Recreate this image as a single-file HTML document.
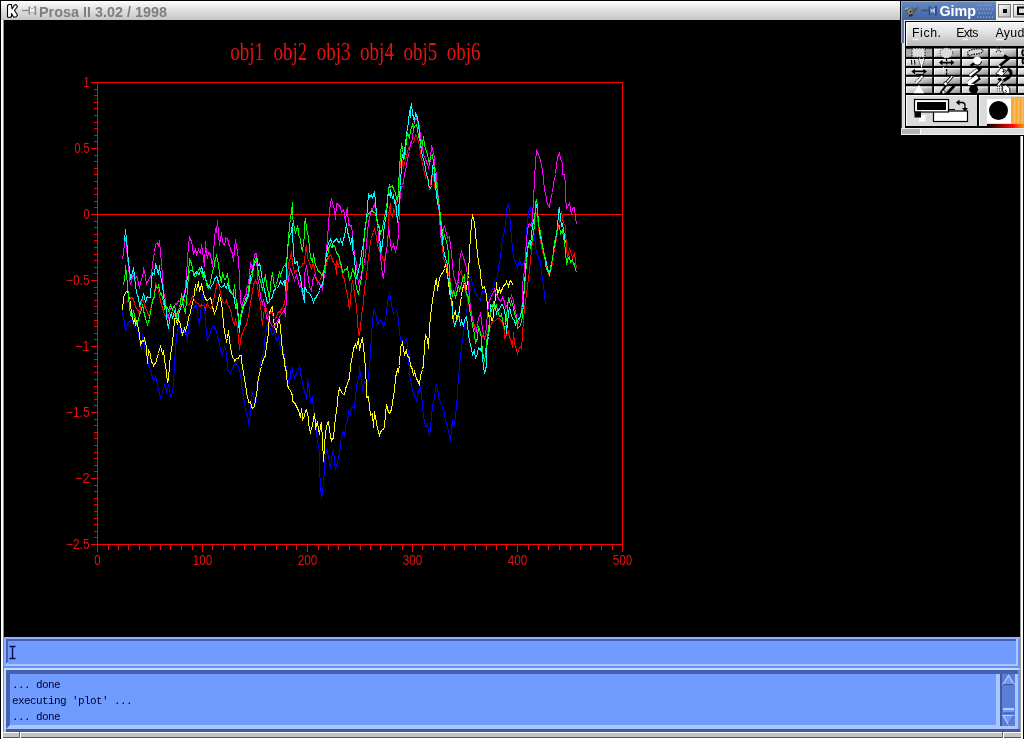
<!DOCTYPE html>
<html><head><meta charset="utf-8"><title>Prosa II 3.02 / 1998</title>
<style>
html,body{margin:0;padding:0;background:#000;}
body{width:1024px;height:739px;position:relative;overflow:hidden;font-family:"Liberation Sans",sans-serif;}
.a{position:absolute;}
.tl{font-family:"Liberation Sans",sans-serif;font-size:14.5px;fill:#e81010;}
.ti{font-family:"Liberation Serif",serif;font-size:25px;fill:#e81010;}
#ttl{left:1px;top:1px;width:899px;height:19px;background:linear-gradient(#fdfdfd,#e4e4e4 40%,#c6c6c6);}
#ttl span{will-change:transform;position:absolute;left:38px;top:3px;font-size:14.4px;font-weight:bold;color:#7e7e7e;letter-spacing:0px;white-space:nowrap;line-height:16px;}
#out{will-change:transform;font-family:"Liberation Mono",monospace;font-size:11px;letter-spacing:-0.6px;color:#00002c;white-space:pre;line-height:16px;left:12px;top:677px;}
.gm{font-size:12px;color:#000;top:25px;line-height:14px;}
</style></head><body>
<!-- main window frame -->
<div class="a" style="left:0;top:0;width:1024px;height:1px;background:#000"></div>
<div class="a" style="left:0;top:0;width:1px;height:739px;background:#000"></div>
<div class="a" style="left:1px;top:1px;width:2px;height:738px;background:#fff"></div>
<div class="a" style="left:3px;top:20px;width:1px;height:712px;background:#8c8c8c"></div>
<div class="a" style="left:1020px;top:136px;width:1px;height:596px;background:#9a9a9a"></div>
<div class="a" style="left:1021px;top:136px;width:2px;height:603px;background:#fff"></div>
<div class="a" style="left:1023px;top:136px;width:1px;height:603px;background:#000"></div>
<div class="a" id="ttl"><span>Prosa II 3.02 / 1998</span></div>
<svg class="a" style="left:0;top:0" width="60" height="20" viewBox="0 0 60 20">
<path d="M7.5 5.5 L9 4.5 L11.5 4.5 L12 9 L14.5 5 L16 4.5 L17.5 6.5 L14.5 10.5 L17.5 15 L16 17 L13.5 17 L11.5 13.5 L11.5 16.5 L10 17.5 L7.500 17 Z" fill="#fff" stroke="#000" stroke-width="1.1" stroke-linejoin="round"/>
<path d="M22 10.5h7" stroke="#8a8a8a" stroke-width="1.4"/>
<path d="M29.500 7L32 9.300L35 6.500V14.500L32 11.700L29.500 14Z" fill="#fafafa" stroke="#8a8a8a" stroke-width="0.8"/>
<path d="M29.200 6.500v8 M35.500 6v9" stroke="#888" stroke-width="1.3"/>
</svg>
<!-- plot -->
<svg class="a" style="left:0;top:20px;will-change:transform" width="1020" height="617" viewBox="0 20 1020 617">
<rect x="97.5" y="82.5" width="525" height="462" fill="none" stroke="#f00" stroke-width="1" shape-rendering="crispEdges"/>
<line x1="97" y1="214.5" x2="622" y2="214.5" stroke="#f00" shape-rendering="crispEdges"/>
<path d="M97.5 82.5h-7M97.5 89.5h-4M97.5 95.5h-4M97.5 102.5h-4M97.5 108.5h-4M97.5 115.5h-4M97.5 122.5h-4M97.5 128.5h-4M97.5 135.5h-4M97.5 141.5h-4M97.5 148.5h-7M97.5 155.5h-4M97.5 161.5h-4M97.5 168.5h-4M97.5 174.5h-4M97.5 181.5h-4M97.5 188.5h-4M97.5 194.5h-4M97.5 201.5h-4M97.5 207.5h-4M97.5 214.5h-7M97.5 221.5h-4M97.5 227.5h-4M97.5 234.5h-4M97.5 240.5h-4M97.5 247.5h-4M97.5 254.5h-4M97.5 260.5h-4M97.5 267.5h-4M97.5 273.5h-4M97.5 280.5h-7M97.5 287.5h-4M97.5 293.5h-4M97.5 300.5h-4M97.5 306.5h-4M97.5 313.5h-4M97.5 320.5h-4M97.5 326.5h-4M97.5 333.5h-4M97.5 339.5h-4M97.5 346.5h-7M97.5 353.5h-4M97.5 359.5h-4M97.5 366.5h-4M97.5 372.5h-4M97.5 379.5h-4M97.5 386.5h-4M97.5 392.5h-4M97.5 399.5h-4M97.5 405.5h-4M97.5 412.5h-7M97.5 419.5h-4M97.5 425.5h-4M97.5 432.5h-4M97.5 438.5h-4M97.5 445.5h-4M97.5 452.5h-4M97.5 458.5h-4M97.5 465.5h-4M97.5 471.5h-4M97.5 478.5h-7M97.5 485.5h-4M97.5 491.5h-4M97.5 498.5h-4M97.5 504.5h-4M97.5 511.5h-4M97.5 518.5h-4M97.5 524.5h-4M97.5 531.5h-4M97.5 537.5h-4M97.5 544.5h-7M97.5 544.5v7M108.5 544.5v5M118.5 544.5v5M128.5 544.5v5M139.5 544.5v5M150.5 544.5v5M160.5 544.5v5M170.5 544.5v5M181.5 544.5v5M192.5 544.5v5M202.5 544.5v7M212.5 544.5v5M223.5 544.5v5M234.5 544.5v5M244.5 544.5v5M254.5 544.5v5M265.5 544.5v5M276.5 544.5v5M286.5 544.5v5M296.5 544.5v5M307.5 544.5v7M318.5 544.5v5M328.5 544.5v5M338.5 544.5v5M349.5 544.5v5M360.5 544.5v5M370.5 544.5v5M380.5 544.5v5M391.5 544.5v5M402.5 544.5v5M412.5 544.5v7M422.5 544.5v5M433.5 544.5v5M444.5 544.5v5M454.5 544.5v5M464.5 544.5v5M475.5 544.5v5M486.5 544.5v5M496.5 544.5v5M506.5 544.5v5M517.5 544.5v7M528.5 544.5v5M538.5 544.5v5M548.5 544.5v5M559.5 544.5v5M570.5 544.5v5M580.5 544.5v5M590.5 544.5v5M601.5 544.5v5M612.5 544.5v5M622.5 544.5v7" stroke="#f00" fill="none" shape-rendering="crispEdges"/>
<text x="89.5" y="86.8" text-anchor="end" textLength="6" lengthAdjust="spacingAndGlyphs" class="tl">1</text>
<text x="89.5" y="152.8" text-anchor="end" textLength="15" lengthAdjust="spacingAndGlyphs" class="tl">0.5</text>
<text x="89.5" y="218.8" text-anchor="end" textLength="6" lengthAdjust="spacingAndGlyphs" class="tl">0</text>
<text x="89.5" y="284.8" text-anchor="end" textLength="23.5" lengthAdjust="spacingAndGlyphs" class="tl">−0.5</text>
<text x="89.5" y="350.8" text-anchor="end" textLength="14.5" lengthAdjust="spacingAndGlyphs" class="tl">−1</text>
<text x="89.5" y="416.8" text-anchor="end" textLength="23.5" lengthAdjust="spacingAndGlyphs" class="tl">−1.5</text>
<text x="89.5" y="482.8" text-anchor="end" textLength="14.5" lengthAdjust="spacingAndGlyphs" class="tl">−2</text>
<text x="89.5" y="548.8" text-anchor="end" textLength="23.5" lengthAdjust="spacingAndGlyphs" class="tl">−2.5</text>
<text x="97.5" y="564.6" text-anchor="middle" textLength="6.5" lengthAdjust="spacingAndGlyphs" class="tl">0</text>
<text x="202.5" y="564.6" text-anchor="middle" textLength="19.5" lengthAdjust="spacingAndGlyphs" class="tl">100</text>
<text x="307.5" y="564.6" text-anchor="middle" textLength="19.5" lengthAdjust="spacingAndGlyphs" class="tl">200</text>
<text x="412.5" y="564.6" text-anchor="middle" textLength="19.5" lengthAdjust="spacingAndGlyphs" class="tl">300</text>
<text x="517.5" y="564.6" text-anchor="middle" textLength="19.5" lengthAdjust="spacingAndGlyphs" class="tl">400</text>
<text x="622.5" y="564.6" text-anchor="middle" textLength="19.5" lengthAdjust="spacingAndGlyphs" class="tl">500</text>
<text x="230.2" y="59.5" textLength="33.8" lengthAdjust="spacingAndGlyphs" class="ti">obj1</text>
<text x="273.5" y="59.5" textLength="33.8" lengthAdjust="spacingAndGlyphs" class="ti">obj2</text>
<text x="316.8" y="59.5" textLength="33.8" lengthAdjust="spacingAndGlyphs" class="ti">obj3</text>
<text x="360.1" y="59.5" textLength="33.8" lengthAdjust="spacingAndGlyphs" class="ti">obj4</text>
<text x="403.4" y="59.5" textLength="33.8" lengthAdjust="spacingAndGlyphs" class="ti">obj5</text>
<text x="446.7" y="59.5" textLength="33.8" lengthAdjust="spacingAndGlyphs" class="ti">obj6</text>
<polyline points="122.5,312.5 124.5,322.5 125.5,330.5 126.5,328.5 126.5,326.5 127.5,324.5 128.5,321.5 129.5,321.5 130.5,320.5 132.5,320.5 133.5,323.5 133.5,324.5 134.5,326.5 136.5,328.5 137.5,329.5 138.5,332.5 139.5,340.5 141.5,349.5 142.5,338.5 142.5,334.5 144.5,342.5 144.5,346.5 145.5,353.5 147.5,359.5 148.5,364.5 149.5,368.5 150.5,369.5 151.5,374.5 152.5,376.5 153.5,381.5 155.5,376.5 156.5,380.5 157.5,385.5 158.5,389.5 159.5,392.5 160.5,398.5 162.5,392.5 164.5,385.5 165.5,387.5 166.5,391.5 167.5,389.5 168.5,384.5 169.5,389.5 170.5,396.5 171.5,396.5 172.5,392.5 173.5,384.5 174.5,363.5 175.5,349.5 176.5,337.5 177.5,330.5 178.5,327.5 179.5,325.5 180.5,330.5 181.5,334.5 182.5,331.5 183.5,327.5 184.5,330.5 185.5,334.5 186.5,332.5 187.5,341.5 188.5,327.5 189.5,321.5 191.5,315.5 192.5,312.5 193.5,308.5 194.5,306.5 195.5,306.5 196.5,304.5 196.5,303.5 197.5,315.5 199.5,325.5 200.5,313.5 202.5,294.5 203.5,300.5 204.5,305.5 205.5,322.5 207.5,341.5 208.5,338.5 209.5,334.5 210.5,332.5 211.5,327.5 212.5,326.5 213.5,325.5 214.5,327.5 216.5,331.5 217.5,336.5 218.5,340.5 219.5,343.5 220.5,349.5 221.5,351.5 222.5,354.5 223.5,349.5 224.5,346.5 226.5,352.5 227.5,369.5 228.5,371.5 229.5,372.5 230.5,373.5 231.5,369.5 232.5,368.5 233.5,366.5 234.5,363.5 235.5,364.5 235.5,362.5 236.5,364.5 237.5,365.5 238.5,366.5 239.5,371.5 240.5,374.5 241.5,380.5 241.5,385.5 242.5,391.5 243.5,396.5 244.5,403.5 245.5,408.5 246.5,413.5 247.5,415.5 248.5,420.5 248.5,424.5 250.5,413.5 251.5,390.5 252.5,394.5 253.5,397.5 254.5,400.5 255.5,404.5 256.5,398.5 256.5,394.5 258.5,380.5 259.5,369.5 260.5,363.5 261.5,358.5 262.5,356.5 263.5,355.5 264.5,344.5 265.5,332.5 267.5,324.5 268.5,325.5 269.5,327.5 270.5,329.5 271.5,332.5 272.5,334.5 273.5,333.5 274.5,330.5 275.5,336.5 276.5,340.5 277.5,340.5 278.5,337.5 279.5,342.5 280.5,348.5 281.5,347.5 282.5,346.5 283.5,353.5 284.5,355.5 285.5,360.5 285.5,362.5 286.5,369.5 287.5,373.5 288.5,382.5 289.5,385.5 290.5,374.5 291.5,366.5 292.5,370.5 292.5,373.5 294.5,376.5 294.5,378.5 295.5,375.5 296.5,373.5 297.5,370.5 298.5,369.5 299.5,366.5 300.5,369.5 300.5,373.5 301.5,377.5 302.5,381.5 303.5,388.5 304.5,390.5 305.5,394.5 306.5,399.5 307.5,386.5 307.5,378.5 309.5,390.5 310.5,402.5 311.5,399.5 312.5,396.5 313.5,408.5 314.5,418.5 316.5,426.5 316.5,432.5 317.5,441.5 319.5,452.5 319.5,469.5 320.5,486.5 321.5,498.5 323.5,483.5 324.5,466.5 325.5,454.5 326.5,451.5 326.5,448.5 328.5,456.5 329.5,463.5 330.5,468.5 331.5,460.5 332.5,452.5 333.5,449.5 334.5,460.5 335.5,470.5 336.5,464.5 337.5,463.5 338.5,456.5 339.5,454.5 340.5,444.5 341.5,437.5 342.5,432.5 343.5,431.5 344.5,436.5 345.5,425.5 347.5,420.5 348.5,413.5 348.5,410.5 349.5,411.5 350.5,413.5 351.5,408.5 352.5,406.5 353.5,407.5 354.5,408.5 355.5,396.5 356.5,385.5 358.5,378.5 359.5,371.5 359.5,366.5 360.5,374.5 361.5,378.5 362.5,390.5 364.5,381.5 365.5,382.5 366.5,385.5 366.5,387.5 367.5,382.5 368.5,378.5 369.5,362.5 370.5,355.5 371.5,332.5 372.5,321.5 373.5,312.5 374.5,310.5 376.5,316.5 377.5,324.5 378.5,322.5 379.5,321.5 380.5,319.5 382.5,322.5 383.5,326.5 384.5,323.5 386.5,313.5 387.5,300.5 389.5,294.5 390.5,298.5 392.5,309.5 393.5,314.5 395.5,312.5 396.5,311.5 396.5,309.5 398.5,319.5 399.5,331.5 400.5,339.5 401.5,341.5 403.5,339.5 404.5,342.5 405.5,339.5 406.5,338.5 407.5,345.5 408.5,354.5 409.5,374.5 411.5,384.5 412.5,391.5 413.5,392.5 414.5,396.5 415.5,397.5 416.5,400.5 417.5,395.5 418.5,391.5 420.5,387.5 421.5,393.5 422.5,406.5 424.5,422.5 425.5,424.5 425.5,426.5 426.5,426.5 427.5,424.5 429.5,435.5 430.5,428.5 431.5,416.5 432.5,406.5 434.5,397.5 435.5,388.5 436.5,384.5 438.5,394.5 439.5,400.5 441.5,403.5 442.5,408.5 444.5,413.5 445.5,421.5 447.5,425.5 448.5,431.5 450.5,441.5 451.5,429.5 452.5,419.5 452.5,426.5 454.5,424.5 455.5,416.5 456.5,406.5 457.5,391.5 458.5,377.5 459.5,365.5 460.5,357.5 461.5,345.5 463.5,334.5 464.5,323.5 466.5,314.5 467.5,304.5 468.5,290.5 469.5,279.5 470.5,275.5 472.5,284.5 473.5,285.5 474.5,290.5 475.5,292.5 476.5,294.5 477.5,296.5 478.5,297.5 479.5,298.5 480.5,300.5 481.5,294.5 482.5,290.5 484.5,290.5 485.5,294.5 486.5,295.5 487.5,298.5 488.5,296.5 489.5,296.5 490.5,295.5 491.5,291.5 492.5,288.5 493.5,287.5 494.5,282.5 495.5,280.5 497.5,275.5 498.5,266.5 500.5,257.5 501.5,246.5 502.5,238.5 504.5,231.5 505.5,225.5 506.5,211.5 507.5,205.5 508.5,204.5 509.5,211.5 510.5,225.5 511.5,237.5 512.5,247.5 513.5,257.5 515.5,262.5 516.5,265.5 517.5,268.5 518.5,264.5 519.5,260.5 520.5,262.5 521.5,266.5 522.5,264.5 523.5,262.5 524.5,260.5 525.5,258.5 526.5,240.5 526.5,229.5 527.5,223.5 528.5,211.5 530.5,207.5 531.5,214.5 532.5,223.5 533.5,232.5 534.5,234.5 535.5,247.5 537.5,254.5 538.5,257.5 539.5,260.5 540.5,260.5 541.5,273.5 543.5,284.5 544.5,294.5 545.5,304.5" fill="none" stroke="#0000ff" stroke-width="1" stroke-linejoin="miter" shape-rendering="crispEdges"/>
<polyline points="122.5,310.5 123.5,297.5 125.5,292.5 126.5,291.5 127.5,290.5 128.5,294.5 130.5,303.5 131.5,313.5 133.5,322.5 134.5,319.5 135.5,324.5 136.5,321.5 138.5,328.5 139.5,335.5 140.5,344.5 142.5,340.5 143.5,341.5 144.5,338.5 146.5,347.5 147.5,363.5 148.5,349.5 150.5,354.5 151.5,362.5 152.5,362.5 153.5,365.5 154.5,363.5 155.5,363.5 157.5,356.5 158.5,353.5 159.5,349.5 160.5,346.5 162.5,353.5 163.5,350.5 164.5,359.5 166.5,372.5 167.5,382.5 168.5,378.5 169.5,366.5 170.5,354.5 172.5,343.5 173.5,331.5 174.5,320.5 175.5,316.5 177.5,324.5 178.5,319.5 180.5,324.5 181.5,330.5 182.5,334.5 184.5,328.5 185.5,330.5 187.5,324.5 188.5,317.5 190.5,312.5 191.5,306.5 193.5,299.5 194.5,292.5 195.5,284.5 196.5,290.5 198.5,281.5 199.5,291.5 201.5,284.5 202.5,288.5 203.5,293.5 204.5,296.5 205.5,298.5 206.5,300.5 207.5,300.5 208.5,299.5 210.5,297.5 211.5,301.5 212.5,306.5 213.5,310.5 214.5,313.5 216.5,308.5 217.5,304.5 218.5,299.5 219.5,294.5 221.5,302.5 222.5,310.5 223.5,324.5 224.5,331.5 226.5,341.5 227.5,338.5 228.5,330.5 229.5,340.5 231.5,352.5 232.5,357.5 233.5,358.5 234.5,359.5 234.5,361.5 235.5,359.5 236.5,358.5 237.5,358.5 238.5,358.5 239.5,355.5 241.5,355.5 241.5,360.5 242.5,367.5 243.5,371.5 244.5,380.5 245.5,383.5 246.5,392.5 247.5,397.5 248.5,400.5 248.5,402.5 250.5,402.5 250.5,401.5 251.5,406.5 252.5,408.5 253.5,407.5 254.5,406.5 255.5,399.5 256.5,394.5 257.5,388.5 257.5,385.5 258.5,377.5 259.5,374.5 260.5,369.5 261.5,366.5 262.5,362.5 263.5,358.5 264.5,357.5 264.5,357.5 265.5,355.5 266.5,344.5 267.5,340.5 268.5,331.5 269.5,313.5 270.5,309.5 272.5,306.5 273.5,318.5 274.5,326.5 276.5,331.5 277.5,324.5 279.5,319.5 280.5,328.5 281.5,338.5 282.5,352.5 284.5,360.5 284.5,364.5 286.5,372.5 286.5,374.5 287.5,384.5 288.5,388.5 289.5,389.5 291.5,392.5 292.5,396.5 292.5,401.5 294.5,402.5 295.5,404.5 295.5,404.5 296.5,406.5 298.5,410.5 299.5,413.5 300.5,417.5 301.5,408.5 302.5,417.5 302.5,420.5 304.5,415.5 305.5,411.5 306.5,409.5 306.5,410.5 308.5,417.5 308.5,422.5 309.5,429.5 310.5,432.5 311.5,428.5 312.5,425.5 313.5,418.5 314.5,413.5 315.5,424.5 315.5,429.5 316.5,424.5 317.5,422.5 318.5,428.5 319.5,434.5 320.5,426.5 321.5,422.5 322.5,440.5 323.5,461.5 324.5,446.5 325.5,432.5 327.5,422.5 328.5,421.5 329.5,429.5 330.5,436.5 331.5,440.5 332.5,438.5 333.5,438.5 334.5,425.5 336.5,410.5 337.5,403.5 337.5,399.5 338.5,392.5 339.5,388.5 340.5,390.5 342.5,393.5 343.5,394.5 344.5,394.5 345.5,390.5 345.5,388.5 346.5,386.5 347.5,383.5 348.5,380.5 349.5,378.5 350.5,366.5 351.5,360.5 352.5,355.5 353.5,348.5 355.5,344.5 356.5,347.5 358.5,338.5 359.5,350.5 361.5,340.5 362.5,338.5 363.5,347.5 364.5,355.5 365.5,369.5 366.5,387.5 366.5,397.5 368.5,396.5 369.5,406.5 370.5,415.5 372.5,413.5 373.5,427.5 374.5,411.5 375.5,417.5 376.5,422.5 377.5,428.5 378.5,431.5 379.5,435.5 380.5,432.5 381.5,430.5 382.5,429.5 383.5,429.5 384.5,426.5 385.5,413.5 386.5,404.5 387.5,408.5 388.5,412.5 389.5,413.5 390.5,411.5 391.5,409.5 392.5,402.5 394.5,390.5 395.5,377.5 397.5,369.5 398.5,371.5 399.5,365.5 400.5,347.5 402.5,342.5 403.5,348.5 404.5,354.5 406.5,350.5 407.5,356.5 409.5,357.5 410.5,365.5 412.5,369.5 413.5,375.5 414.5,371.5 416.5,378.5 417.5,380.5 419.5,384.5 420.5,375.5 422.5,369.5 423.5,365.5 424.5,345.5 425.5,334.5 427.5,339.5 428.5,348.5 429.5,328.5 430.5,316.5 431.5,307.5 432.5,300.5 434.5,288.5 435.5,281.5 436.5,279.5 437.5,290.5 439.5,278.5 440.5,275.5 441.5,274.5 442.5,272.5 443.5,271.5 444.5,268.5 445.5,264.5 447.5,275.5 448.5,282.5 449.5,291.5 450.5,298.5 452.5,301.5 452.5,318.5 454.5,313.5 455.5,310.5 456.5,319.5 458.5,316.5 459.5,309.5 460.5,302.5 461.5,296.5 462.5,288.5 463.5,286.5 464.5,284.5 466.5,288.5 467.5,281.5 468.5,275.5 469.5,251.5 470.5,236.5 471.5,224.5 472.5,214.5 474.5,222.5 475.5,233.5 476.5,244.5 477.5,252.5 478.5,263.5 480.5,270.5 480.5,275.5 481.5,282.5 482.5,288.5 484.5,286.5 484.5,287.5 486.5,294.5 487.5,306.5 488.5,316.5 489.5,316.5 490.5,314.5 491.5,319.5 492.5,322.5 493.5,313.5 494.5,304.5 495.5,297.5 496.5,282.5 497.5,294.5 499.5,288.5 500.5,292.5 502.5,288.5 503.5,285.5 505.5,284.5 506.5,281.5 508.5,286.5 509.5,282.5 510.5,280.5 512.5,283.5 512.5,284.5" fill="none" stroke="#ffff00" stroke-width="1" stroke-linejoin="miter" shape-rendering="crispEdges"/>
<polyline points="125.5,303.5 126.5,302.5 127.5,301.5 128.5,299.5 129.5,300.5 130.5,297.5 131.5,297.5 132.5,297.5 133.5,299.5 134.5,303.5 135.5,306.5 136.5,308.5 137.5,309.5 139.5,313.5 140.5,306.5 141.5,301.5 142.5,299.5 143.5,300.5 144.5,305.5 145.5,307.5 147.5,312.5 148.5,314.5 148.5,315.5 149.5,313.5 150.5,309.5 151.5,304.5 152.5,300.5 154.5,296.5 155.5,282.5 156.5,286.5 158.5,289.5 158.5,290.5 159.5,295.5 160.5,300.5 161.5,305.5 162.5,307.5 163.5,311.5 164.5,314.5 165.5,316.5 166.5,317.5 167.5,316.5 168.5,318.5 169.5,318.5 170.5,315.5 171.5,312.5 172.5,312.5 173.5,313.5 174.5,314.5 175.5,316.5 176.5,318.5 177.5,314.5 178.5,311.5 179.5,311.5 180.5,308.5 181.5,304.5 182.5,303.5 183.5,303.5 184.5,300.5 185.5,302.5 186.5,302.5 187.5,302.5 188.5,305.5 189.5,304.5 190.5,301.5 191.5,298.5 192.5,296.5 193.5,298.5 194.5,299.5 195.5,302.5 196.5,302.5 197.5,303.5 198.5,303.5 199.5,306.5 200.5,306.5 201.5,304.5 202.5,305.5 203.5,305.5 204.5,306.5 205.5,309.5 206.5,305.5 207.5,303.5 208.5,306.5 210.5,308.5 211.5,307.5 212.5,304.5 212.5,303.5 214.5,296.5 215.5,290.5 216.5,286.5 217.5,279.5 218.5,282.5 219.5,287.5 220.5,291.5 221.5,297.5 222.5,301.5 224.5,303.5 225.5,302.5 226.5,300.5 227.5,304.5 228.5,305.5 229.5,307.5 230.5,310.5 231.5,313.5 232.5,319.5 234.5,325.5 235.5,318.5 237.5,327.5 238.5,338.5 239.5,349.5 240.5,340.5 242.5,332.5 243.5,331.5 244.5,327.5 245.5,326.5 246.5,324.5 247.5,319.5 248.5,316.5 249.5,309.5 250.5,303.5 252.5,291.5 253.5,284.5 254.5,282.5 255.5,280.5 257.5,284.5 258.5,294.5 260.5,303.5 261.5,316.5 262.5,325.5 263.5,313.5 265.5,306.5 266.5,310.5 267.5,313.5 268.5,316.5 268.5,317.5 269.5,314.5 270.5,313.5 271.5,311.5 272.5,312.5 273.5,318.5 274.5,319.5 275.5,318.5 276.5,316.5 277.5,313.5 278.5,311.5 280.5,312.5 280.5,309.5 282.5,308.5 283.5,305.5 284.5,303.5 285.5,297.5 286.5,285.5 287.5,274.5 288.5,263.5 290.5,257.5 291.5,251.5 292.5,263.5 294.5,272.5 295.5,270.5 296.5,271.5 297.5,269.5 298.5,268.5 299.5,266.5 300.5,267.5 301.5,266.5 302.5,263.5 304.5,263.5 305.5,248.5 306.5,245.5 307.5,257.5 309.5,263.5 310.5,265.5 311.5,269.5 312.5,264.5 313.5,263.5 314.5,268.5 315.5,275.5 316.5,278.5 317.5,283.5 318.5,281.5 320.5,279.5 321.5,276.5 322.5,273.5 323.5,271.5 324.5,269.5 325.5,268.5 326.5,263.5 327.5,259.5 328.5,257.5 329.5,255.5 330.5,254.5 331.5,256.5 332.5,260.5 333.5,262.5 334.5,263.5 335.5,265.5 336.5,274.5 336.5,260.5 338.5,266.5 339.5,261.5 341.5,269.5 342.5,274.5 343.5,278.5 344.5,278.5 345.5,286.5 347.5,294.5 348.5,303.5 349.5,309.5 350.5,300.5 351.5,286.5 352.5,280.5 354.5,293.5 356.5,306.5 357.5,321.5 358.5,334.5 359.5,335.5 360.5,326.5 361.5,315.5 363.5,302.5 364.5,288.5 366.5,277.5 367.5,265.5 369.5,248.5 370.5,241.5 371.5,238.5 372.5,234.5 373.5,232.5 374.5,228.5 376.5,236.5 377.5,245.5 378.5,248.5 379.5,247.5 380.5,247.5 381.5,252.5 382.5,258.5 384.5,261.5 385.5,254.5 387.5,244.5 388.5,229.5 388.5,214.5 390.5,203.5 390.5,211.5 392.5,217.5 393.5,208.5 394.5,211.5 396.5,204.5 397.5,200.5 398.5,189.5 399.5,185.5 400.5,151.5 402.5,162.5 403.5,168.5 404.5,162.5 406.5,156.5 407.5,151.5 408.5,148.5 409.5,146.5 410.5,145.5 411.5,142.5 412.5,143.5 413.5,142.5 414.5,139.5 415.5,134.5 416.5,135.5 417.5,138.5 419.5,145.5 420.5,154.5 422.5,162.5 423.5,168.5 425.5,177.5 426.5,174.5 428.5,183.5 429.5,189.5 430.5,182.5 431.5,177.5 433.5,174.5 434.5,186.5 436.5,192.5 437.5,198.5 438.5,206.5 439.5,214.5 440.5,226.5 441.5,235.5 442.5,246.5 443.5,258.5 444.5,261.5 446.5,264.5 447.5,270.5 448.5,274.5 450.5,279.5 450.5,287.5 451.5,289.5 452.5,292.5 453.5,293.5 455.5,290.5 456.5,284.5 457.5,281.5 458.5,278.5 459.5,273.5 461.5,270.5 462.5,279.5 463.5,282.5 464.5,286.5 465.5,291.5 466.5,293.5 467.5,297.5 468.5,304.5 469.5,307.5 470.5,312.5 471.5,313.5 472.5,318.5 473.5,322.5 474.5,326.5 476.5,327.5 477.5,331.5 478.5,331.5 479.5,332.5 480.5,334.5 481.5,334.5 482.5,336.5 484.5,336.5 485.5,335.5 486.5,334.5 487.5,331.5 488.5,328.5 489.5,326.5 490.5,327.5 491.5,323.5 492.5,321.5 493.5,320.5 494.5,321.5 496.5,319.5 497.5,318.5 498.5,318.5 499.5,318.5 500.5,319.5 502.5,323.5 503.5,326.5 504.5,331.5 504.5,338.5 506.5,334.5 507.5,333.5 508.5,331.5 509.5,337.5 511.5,341.5 512.5,347.5 513.5,332.5 514.5,343.5 516.5,349.5 517.5,354.5 518.5,349.5 520.5,346.5 521.5,349.5 522.5,334.5 523.5,319.5 524.5,308.5 526.5,294.5 527.5,286.5 528.5,278.5 529.5,269.5 530.5,260.5 531.5,249.5 532.5,240.5 533.5,232.5 534.5,224.5 535.5,211.5 537.5,217.5 538.5,225.5 539.5,236.5 540.5,240.5 541.5,246.5 542.5,250.5 543.5,254.5 544.5,257.5 545.5,262.5 546.5,267.5 547.5,270.5 548.5,272.5 549.5,276.5 550.5,270.5 551.5,268.5 552.5,262.5 553.5,256.5 554.5,248.5 555.5,244.5 556.5,238.5 557.5,232.5 558.5,225.5 559.5,220.5 560.5,217.5 561.5,211.5 562.5,218.5 563.5,223.5 565.5,225.5 565.5,231.5 567.5,259.5 568.5,253.5 569.5,248.5 571.5,254.5 572.5,257.5 574.5,253.5 575.5,260.5 576.5,268.5" fill="none" stroke="#ff0000" stroke-width="1" stroke-linejoin="miter" shape-rendering="crispEdges"/>
<polyline points="122.5,259.5 124.5,244.5 125.5,237.5 126.5,246.5 127.5,259.5 128.5,263.5 129.5,279.5 130.5,284.5 132.5,276.5 133.5,273.5 134.5,279.5 136.5,276.5 137.5,278.5 139.5,288.5 140.5,282.5 142.5,276.5 143.5,271.5 143.5,267.5 145.5,276.5 146.5,284.5 148.5,279.5 149.5,278.5 151.5,274.5 152.5,263.5 154.5,252.5 155.5,244.5 157.5,242.5 158.5,246.5 159.5,240.5 160.5,252.5 161.5,263.5 162.5,276.5 163.5,290.5 164.5,296.5 165.5,299.5 166.5,312.5 168.5,318.5 169.5,310.5 170.5,308.5 171.5,308.5 172.5,308.5 174.5,307.5 175.5,303.5 176.5,304.5 177.5,302.5 178.5,300.5 179.5,301.5 180.5,300.5 181.5,298.5 182.5,297.5 183.5,295.5 184.5,294.5 185.5,285.5 186.5,274.5 187.5,259.5 188.5,244.5 189.5,237.5 191.5,241.5 192.5,246.5 193.5,254.5 195.5,248.5 196.5,254.5 196.5,255.5 198.5,249.5 199.5,252.5 200.5,253.5 201.5,244.5 203.5,258.5 204.5,266.5 205.5,241.5 206.5,253.5 207.5,258.5 208.5,252.5 209.5,252.5 210.5,254.5 212.5,266.5 213.5,253.5 214.5,237.5 215.5,229.5 216.5,231.5 217.5,220.5 218.5,233.5 219.5,245.5 221.5,232.5 222.5,242.5 224.5,245.5 225.5,241.5 225.5,237.5 226.5,238.5 227.5,238.5 229.5,246.5 230.5,247.5 230.5,249.5 232.5,253.5 233.5,261.5 234.5,249.5 235.5,239.5 237.5,252.5 238.5,259.5 239.5,277.5 240.5,301.5 241.5,306.5 242.5,304.5 243.5,299.5 244.5,297.5 246.5,293.5 246.5,288.5 248.5,284.5 249.5,274.5 250.5,263.5 251.5,265.5 252.5,269.5 253.5,261.5 254.5,254.5 256.5,253.5 257.5,277.5 259.5,286.5 260.5,297.5 262.5,303.5 263.5,299.5 265.5,309.5 266.5,318.5 267.5,317.5 268.5,321.5 269.5,322.5 270.5,322.5 271.5,325.5 272.5,326.5 273.5,325.5 274.5,326.5 275.5,324.5 276.5,322.5 277.5,321.5 278.5,319.5 279.5,316.5 280.5,315.5 282.5,312.5 283.5,311.5 284.5,309.5 285.5,316.5 286.5,296.5 287.5,286.5 288.5,277.5 290.5,269.5 291.5,271.5 292.5,274.5 292.5,274.5 294.5,280.5 295.5,277.5 296.5,275.5 298.5,281.5 299.5,287.5 300.5,284.5 302.5,294.5 304.5,288.5 304.5,274.5 306.5,265.5 307.5,272.5 308.5,278.5 309.5,286.5 311.5,291.5 312.5,280.5 313.5,278.5 314.5,275.5 315.5,278.5 317.5,280.5 318.5,281.5 319.5,283.5 320.5,285.5 321.5,284.5 322.5,290.5 323.5,280.5 325.5,271.5 325.5,257.5 327.5,239.5 328.5,223.5 329.5,210.5 331.5,198.5 332.5,203.5 334.5,209.5 335.5,219.5 336.5,203.5 338.5,204.5 339.5,206.5 340.5,206.5 341.5,212.5 343.5,209.5 344.5,214.5 345.5,222.5 346.5,210.5 347.5,207.5 348.5,225.5 349.5,224.5 350.5,226.5 351.5,225.5 352.5,234.5 353.5,245.5 354.5,254.5 356.5,263.5 357.5,275.5 358.5,283.5 359.5,281.5 360.5,276.5 361.5,275.5 362.5,270.5 364.5,263.5 365.5,253.5 366.5,245.5 367.5,231.5 368.5,222.5 369.5,218.5 370.5,213.5 371.5,208.5 372.5,209.5 373.5,206.5 374.5,204.5 376.5,213.5 377.5,225.5 378.5,236.5 379.5,248.5 380.5,255.5 382.5,275.5 383.5,278.5 384.5,267.5 385.5,255.5 387.5,244.5 388.5,226.5 389.5,232.5 390.5,244.5 391.5,249.5 393.5,244.5 394.5,248.5 395.5,251.5 397.5,244.5 398.5,233.5 399.5,208.5 400.5,189.5 402.5,185.5 403.5,181.5 404.5,174.5 406.5,165.5 407.5,158.5 409.5,151.5 410.5,143.5 412.5,138.5 413.5,127.5 414.5,120.5 416.5,117.5 417.5,121.5 419.5,126.5 420.5,136.5 422.5,146.5 423.5,154.5 425.5,159.5 426.5,161.5 427.5,165.5 428.5,166.5 428.5,168.5 430.5,159.5 431.5,145.5 432.5,149.5 434.5,156.5 434.5,165.5 436.5,174.5 437.5,189.5 438.5,200.5 439.5,218.5 441.5,244.5 442.5,233.5 443.5,228.5 444.5,226.5 446.5,233.5 447.5,238.5 449.5,236.5 450.5,244.5 451.5,252.5 452.5,264.5 453.5,275.5 455.5,281.5 456.5,285.5 458.5,281.5 459.5,261.5 460.5,254.5 461.5,251.5 463.5,257.5 464.5,261.5 466.5,267.5 467.5,276.5 468.5,284.5 469.5,297.5 470.5,307.5 472.5,318.5 473.5,323.5 474.5,329.5 476.5,332.5 477.5,323.5 478.5,318.5 480.5,313.5 481.5,320.5 482.5,329.5 484.5,339.5 485.5,334.5 486.5,325.5 487.5,313.5 488.5,304.5 489.5,300.5 490.5,298.5 491.5,295.5 492.5,294.5 494.5,289.5 495.5,293.5 496.5,294.5 497.5,296.5 498.5,298.5 499.5,300.5 500.5,301.5 501.5,299.5 502.5,297.5 504.5,301.5 505.5,307.5 506.5,305.5 507.5,304.5 508.5,301.5 509.5,298.5 510.5,298.5 511.5,295.5 513.5,300.5 514.5,307.5 516.5,316.5 517.5,325.5 519.5,319.5 520.5,316.5 522.5,301.5 522.5,284.5 524.5,269.5 525.5,254.5 526.5,240.5 527.5,229.5 528.5,225.5 529.5,223.5 531.5,226.5 532.5,217.5 533.5,199.5 534.5,179.5 535.5,161.5 536.5,150.5 538.5,154.5 539.5,157.5 540.5,160.5 542.5,170.5 543.5,179.5 544.5,189.5 546.5,198.5 547.5,204.5 549.5,207.5 550.5,199.5 552.5,192.5 553.5,183.5 555.5,174.5 556.5,164.5 557.5,157.5 559.5,153.5 560.5,158.5 562.5,163.5 562.5,174.5 564.5,174.5 565.5,185.5 565.5,196.5 566.5,208.5 568.5,205.5 569.5,202.5 570.5,208.5 571.5,214.5 572.5,208.5 574.5,207.5 575.5,217.5 576.5,223.5 577.5,224.5" fill="none" stroke="#ff00ff" stroke-width="1" stroke-linejoin="miter" shape-rendering="crispEdges"/>
<polyline points="124.5,241.5 125.5,229.5 127.5,249.5 128.5,263.5 129.5,268.5 130.5,279.5 132.5,272.5 133.5,267.5 134.5,276.5 136.5,292.5 137.5,295.5 138.5,297.5 139.5,306.5 141.5,299.5 142.5,298.5 143.5,294.5 144.5,296.5 145.5,302.5 146.5,298.5 147.5,296.5 148.5,297.5 150.5,297.5 151.5,279.5 152.5,272.5 154.5,274.5 155.5,263.5 157.5,270.5 158.5,274.5 159.5,265.5 160.5,275.5 162.5,285.5 163.5,294.5 164.5,303.5 166.5,309.5 166.5,316.5 168.5,328.5 169.5,319.5 171.5,312.5 172.5,318.5 173.5,315.5 174.5,310.5 175.5,315.5 177.5,319.5 178.5,316.5 179.5,310.5 180.5,309.5 181.5,305.5 182.5,303.5 183.5,298.5 184.5,294.5 185.5,291.5 186.5,284.5 187.5,276.5 188.5,275.5 189.5,271.5 190.5,270.5 191.5,270.5 192.5,269.5 193.5,272.5 194.5,274.5 195.5,272.5 196.5,271.5 197.5,273.5 199.5,274.5 200.5,270.5 201.5,266.5 202.5,270.5 203.5,274.5 204.5,275.5 205.5,279.5 206.5,281.5 207.5,284.5 208.5,286.5 210.5,288.5 211.5,285.5 212.5,284.5 213.5,283.5 214.5,279.5 215.5,277.5 216.5,276.5 217.5,278.5 218.5,282.5 219.5,285.5 221.5,287.5 222.5,286.5 223.5,286.5 224.5,284.5 225.5,287.5 226.5,288.5 227.5,284.5 228.5,286.5 229.5,290.5 230.5,292.5 232.5,294.5 233.5,295.5 234.5,299.5 235.5,308.5 236.5,304.5 237.5,303.5 238.5,322.5 239.5,332.5 240.5,318.5 242.5,310.5 243.5,307.5 244.5,304.5 245.5,302.5 246.5,301.5 247.5,297.5 248.5,296.5 249.5,288.5 250.5,276.5 251.5,273.5 252.5,269.5 253.5,268.5 254.5,264.5 254.5,263.5 255.5,262.5 257.5,258.5 257.5,266.5 259.5,263.5 260.5,267.5 261.5,274.5 262.5,281.5 263.5,284.5 264.5,290.5 265.5,294.5 266.5,299.5 267.5,303.5 268.5,302.5 270.5,299.5 271.5,298.5 272.5,296.5 273.5,291.5 274.5,289.5 276.5,288.5 277.5,287.5 278.5,286.5 279.5,283.5 280.5,281.5 281.5,283.5 282.5,284.5 283.5,281.5 284.5,280.5 285.5,290.5 287.5,248.5 288.5,239.5 289.5,236.5 291.5,231.5 292.5,223.5 292.5,236.5 294.5,263.5 295.5,263.5 296.5,261.5 297.5,261.5 298.5,269.5 300.5,277.5 301.5,283.5 302.5,291.5 304.5,302.5 304.5,287.5 305.5,287.5 306.5,291.5 307.5,292.5 308.5,292.5 309.5,293.5 310.5,294.5 312.5,299.5 313.5,302.5 314.5,299.5 314.5,298.5 315.5,298.5 317.5,294.5 318.5,293.5 319.5,290.5 320.5,286.5 321.5,286.5 322.5,284.5 323.5,277.5 324.5,269.5 325.5,261.5 326.5,253.5 328.5,242.5 329.5,241.5 330.5,239.5 331.5,241.5 332.5,244.5 333.5,241.5 334.5,241.5 335.5,239.5 336.5,238.5 338.5,242.5 339.5,242.5 340.5,239.5 342.5,244.5 343.5,238.5 344.5,236.5 346.5,223.5 347.5,231.5 349.5,239.5 350.5,244.5 352.5,236.5 352.5,248.5 354.5,257.5 355.5,272.5 356.5,277.5 358.5,271.5 359.5,265.5 360.5,263.5 361.5,251.5 363.5,244.5 364.5,231.5 366.5,219.5 367.5,207.5 368.5,193.5 369.5,197.5 371.5,194.5 372.5,198.5 373.5,194.5 374.5,191.5 375.5,201.5 376.5,214.5 377.5,223.5 379.5,229.5 380.5,252.5 382.5,244.5 383.5,233.5 384.5,224.5 386.5,214.5 387.5,201.5 388.5,191.5 390.5,197.5 390.5,189.5 392.5,198.5 393.5,194.5 394.5,203.5 395.5,200.5 396.5,211.5 397.5,222.5 398.5,210.5 399.5,197.5 400.5,185.5 401.5,162.5 402.5,154.5 403.5,159.5 404.5,151.5 405.5,143.5 406.5,134.5 408.5,121.5 409.5,110.5 410.5,117.5 410.5,108.5 411.5,103.5 412.5,113.5 414.5,121.5 415.5,113.5 417.5,117.5 418.5,124.5 419.5,133.5 420.5,143.5 421.5,151.5 422.5,156.5 424.5,162.5 425.5,168.5 426.5,174.5 428.5,180.5 428.5,185.5 430.5,188.5 431.5,185.5 432.5,165.5 434.5,170.5 434.5,177.5 435.5,185.5 436.5,194.5 437.5,203.5 439.5,210.5 440.5,220.5 441.5,229.5 442.5,241.5 443.5,249.5 444.5,254.5 445.5,258.5 447.5,264.5 447.5,275.5 449.5,284.5 450.5,294.5 452.5,309.5 453.5,319.5 454.5,326.5 455.5,322.5 457.5,318.5 458.5,312.5 460.5,325.5 461.5,320.5 463.5,326.5 464.5,319.5 466.5,316.5 467.5,325.5 468.5,334.5 469.5,341.5 471.5,348.5 472.5,354.5 474.5,350.5 475.5,358.5 477.5,353.5 478.5,347.5 480.5,350.5 481.5,345.5 482.5,357.5 484.5,373.5 485.5,369.5 486.5,365.5 486.5,348.5 488.5,336.5 489.5,328.5 490.5,304.5 491.5,306.5 492.5,307.5 493.5,306.5 494.5,304.5 496.5,313.5 497.5,310.5 498.5,310.5 499.5,308.5 500.5,307.5 501.5,304.5 502.5,304.5 504.5,310.5 505.5,316.5 506.5,333.5 507.5,322.5 508.5,313.5 509.5,307.5 510.5,310.5 511.5,316.5 513.5,319.5 514.5,320.5 515.5,324.5 516.5,322.5 518.5,319.5 519.5,317.5 520.5,316.5 521.5,312.5 522.5,307.5 523.5,298.5 524.5,284.5 525.5,269.5 526.5,257.5 527.5,247.5 529.5,240.5 530.5,246.5 531.5,234.5 532.5,225.5 534.5,217.5 535.5,208.5 536.5,204.5 537.5,211.5 538.5,221.5 539.5,232.5 540.5,236.5 541.5,240.5 542.5,245.5 543.5,250.5 544.5,256.5 545.5,258.5 546.5,263.5 547.5,268.5 548.5,272.5 549.5,274.5 550.5,269.5 551.5,264.5 552.5,257.5 553.5,252.5 554.5,244.5 555.5,240.5 556.5,233.5 557.5,228.5 558.5,211.5 559.5,207.5 560.5,217.5 561.5,226.5 562.5,223.5 563.5,229.5 564.5,235.5 565.5,243.5" fill="none" stroke="#00ffff" stroke-width="1" stroke-linejoin="miter" shape-rendering="crispEdges"/>
<polyline points="123.5,285.5 125.5,271.5 125.5,265.5 127.5,284.5 128.5,297.5 129.5,305.5 130.5,315.5 132.5,316.5 133.5,310.5 135.5,318.5 136.5,324.5 137.5,321.5 138.5,319.5 139.5,314.5 140.5,312.5 142.5,305.5 143.5,309.5 143.5,310.5 144.5,314.5 145.5,318.5 146.5,321.5 147.5,324.5 148.5,321.5 149.5,319.5 150.5,311.5 151.5,308.5 152.5,300.5 154.5,296.5 155.5,285.5 157.5,288.5 158.5,285.5 159.5,289.5 160.5,294.5 161.5,293.5 163.5,302.5 164.5,307.5 164.5,309.5 166.5,307.5 166.5,306.5 167.5,307.5 168.5,310.5 169.5,307.5 170.5,305.5 171.5,307.5 172.5,309.5 173.5,306.5 174.5,305.5 176.5,315.5 177.5,312.5 178.5,310.5 179.5,307.5 180.5,303.5 181.5,293.5 182.5,302.5 184.5,309.5 185.5,313.5 186.5,299.5 187.5,290.5 188.5,274.5 189.5,258.5 190.5,261.5 191.5,263.5 192.5,268.5 193.5,274.5 194.5,276.5 195.5,276.5 196.5,275.5 197.5,271.5 198.5,270.5 199.5,268.5 201.5,272.5 202.5,274.5 203.5,279.5 204.5,271.5 206.5,284.5 207.5,287.5 208.5,288.5 209.5,286.5 210.5,281.5 211.5,276.5 212.5,271.5 214.5,265.5 214.5,262.5 215.5,258.5 216.5,255.5 218.5,263.5 219.5,274.5 221.5,282.5 222.5,272.5 224.5,279.5 225.5,279.5 226.5,276.5 227.5,273.5 228.5,282.5 229.5,287.5 230.5,291.5 231.5,291.5 232.5,294.5 233.5,294.5 234.5,284.5 236.5,303.5 237.5,313.5 239.5,324.5 240.5,316.5 242.5,308.5 243.5,304.5 244.5,303.5 245.5,299.5 246.5,297.5 247.5,296.5 248.5,292.5 249.5,279.5 250.5,283.5 252.5,274.5 253.5,268.5 254.5,260.5 256.5,257.5 257.5,266.5 259.5,278.5 260.5,280.5 262.5,290.5 263.5,284.5 265.5,274.5 266.5,284.5 268.5,293.5 269.5,300.5 270.5,284.5 272.5,272.5 273.5,281.5 274.5,286.5 275.5,287.5 276.5,284.5 277.5,280.5 279.5,271.5 280.5,275.5 282.5,269.5 283.5,266.5 284.5,265.5 285.5,266.5 287.5,253.5 288.5,239.5 289.5,225.5 290.5,219.5 292.5,202.5 292.5,216.5 294.5,229.5 295.5,232.5 296.5,229.5 297.5,226.5 298.5,230.5 298.5,234.5 300.5,239.5 301.5,247.5 302.5,251.5 304.5,234.5 304.5,223.5 305.5,218.5 306.5,229.5 308.5,236.5 309.5,248.5 310.5,257.5 312.5,261.5 313.5,255.5 313.5,253.5 314.5,260.5 315.5,265.5 316.5,266.5 317.5,269.5 318.5,271.5 320.5,272.5 321.5,275.5 322.5,275.5 323.5,271.5 324.5,269.5 325.5,263.5 327.5,257.5 328.5,248.5 329.5,246.5 330.5,244.5 331.5,247.5 332.5,247.5 333.5,245.5 334.5,245.5 335.5,248.5 336.5,253.5 337.5,253.5 339.5,257.5 340.5,263.5 341.5,265.5 342.5,272.5 343.5,272.5 344.5,269.5 346.5,269.5 347.5,266.5 348.5,274.5 349.5,280.5 350.5,277.5 351.5,275.5 352.5,269.5 354.5,273.5 355.5,280.5 356.5,288.5 358.5,294.5 359.5,287.5 361.5,277.5 362.5,265.5 363.5,249.5 364.5,234.5 365.5,226.5 366.5,219.5 367.5,214.5 368.5,214.5 369.5,212.5 370.5,211.5 372.5,210.5 373.5,212.5 374.5,212.5 375.5,213.5 376.5,218.5 377.5,223.5 379.5,226.5 380.5,233.5 382.5,228.5 383.5,222.5 384.5,217.5 386.5,207.5 387.5,198.5 388.5,189.5 389.5,185.5 390.5,187.5 392.5,185.5 393.5,189.5 395.5,192.5 396.5,198.5 397.5,201.5 398.5,192.5 398.5,185.5 399.5,168.5 400.5,154.5 401.5,143.5 403.5,154.5 404.5,158.5 405.5,151.5 406.5,139.5 407.5,132.5 409.5,138.5 410.5,130.5 412.5,124.5 413.5,129.5 414.5,126.5 416.5,124.5 417.5,129.5 418.5,136.5 420.5,142.5 421.5,149.5 422.5,143.5 423.5,136.5 424.5,145.5 425.5,148.5 427.5,154.5 428.5,159.5 429.5,164.5 430.5,156.5 432.5,154.5 433.5,162.5 434.5,168.5 435.5,177.5 436.5,185.5 437.5,192.5 438.5,200.5 439.5,207.5 440.5,216.5 441.5,224.5 442.5,233.5 443.5,238.5 444.5,235.5 446.5,241.5 447.5,246.5 448.5,252.5 449.5,275.5 450.5,287.5 452.5,296.5 453.5,290.5 455.5,297.5 456.5,293.5 458.5,285.5 459.5,290.5 461.5,284.5 462.5,279.5 464.5,275.5 465.5,288.5 466.5,293.5 468.5,297.5 469.5,309.5 471.5,318.5 472.5,325.5 474.5,334.5 475.5,342.5 477.5,338.5 478.5,326.5 480.5,332.5 481.5,339.5 482.5,351.5 484.5,361.5 485.5,354.5 486.5,341.5 488.5,331.5 489.5,319.5 490.5,313.5 492.5,307.5 493.5,301.5 494.5,307.5 496.5,304.5 497.5,310.5 499.5,316.5 500.5,316.5 501.5,313.5 502.5,319.5 504.5,328.5 505.5,325.5 507.5,307.5 508.5,297.5 510.5,304.5 511.5,301.5 513.5,307.5 514.5,313.5 516.5,319.5 517.5,328.5 519.5,326.5 520.5,325.5 522.5,316.5 523.5,301.5 524.5,286.5 525.5,275.5 526.5,263.5 527.5,251.5 528.5,244.5 529.5,241.5 530.5,248.5 532.5,238.5 533.5,232.5 534.5,225.5 535.5,202.5 536.5,199.5 537.5,205.5 538.5,225.5 540.5,231.5 541.5,240.5 542.5,247.5 544.5,254.5 545.5,263.5 546.5,269.5 548.5,272.5 549.5,273.5 550.5,266.5 552.5,259.5 553.5,250.5 554.5,241.5 556.5,234.5 557.5,225.5 558.5,225.5 559.5,225.5 560.5,234.5 562.5,229.5 563.5,237.5 564.5,241.5 565.5,251.5 566.5,264.5 568.5,257.5 569.5,256.5 570.5,262.5 572.5,259.5 573.5,264.5 574.5,263.5 575.5,269.5 576.5,272.5" fill="none" stroke="#00ff00" stroke-width="1" stroke-linejoin="miter" shape-rendering="crispEdges"/>

</svg>
<!-- bottom panels -->
<div class="a" style="left:4px;top:637px;width:1016px;height:95px;background:#709cff"></div>
<div class="a" style="left:4px;top:637px;width:1016px;height:2px;background:#8fb2fb"></div>
<div class="a" style="left:4px;top:637px;width:2px;height:30px;background:#8fb2fb"></div>
<!-- input field -->
<div class="a" style="left:6px;top:639px;width:1012px;height:27px;background:#a9c6ff"></div>
<div class="a" style="left:6px;top:639px;width:1010px;height:25px;background:#4462b0"></div>
<div class="a" style="left:8px;top:641px;width:1008px;height:23px;background:#709cff"></div>
<div class="a" style="left:1018px;top:639px;width:2px;height:29px;background:#6890ee"></div>
<div class="a" style="left:4px;top:666px;width:1016px;height:2px;background:#6890ee"></div>
<svg class="a" style="left:8px;top:644px" width="10" height="18" viewBox="0 0 10 18"><path d="M1.5 2.5h6M1.5 14.5h6M4.5 2.5v12" stroke="#0a0a4a" stroke-width="1.4" fill="none"/></svg>
<!-- output panel -->
<div class="a" style="left:4px;top:668px;width:1016px;height:64px;background:#a9c6ff"></div>
<div class="a" style="left:4px;top:668px;width:1014px;height:2px;background:#c8dcff"></div>
<div class="a" style="left:4px;top:668px;width:2px;height:62px;background:#c8dcff"></div>
<div class="a" style="left:6px;top:670px;width:1012px;height:59px;background:#4462b0"></div>
<div class="a" style="left:1018px;top:670px;width:2px;height:62px;background:#6890ee"></div>
<div class="a" style="left:6px;top:729px;width:1014px;height:3px;background:#42599a"></div>
<div class="a" style="left:10px;top:674px;width:1008px;height:55px;background:#a9c6ff"></div>
<div class="a" style="left:10px;top:674px;width:986px;height:51px;background:#709cff"></div>
<svg class="a" style="left:6px;top:725px" width="4" height="4" viewBox="0 0 4 4"><path d="M0 4L4 0V4Z" fill="#a9c6ff"/></svg>
<svg class="a" style="left:6px;top:662px" width="2" height="2" viewBox="0 0 2 2"><path d="M0 2L2 0V2Z" fill="#a9c6ff"/></svg>
<!-- scrollbar -->
<div class="a" style="left:1000px;top:674px;width:2px;height:52px;background:#42599a"></div>
<div class="a" style="left:1002px;top:674px;width:13px;height:52px;background:#5b7fd6"></div>
<svg class="a" style="left:1002px;top:674px" width="13" height="52" viewBox="0 0 13 52">
<path d="M6.5 1.5L1 10.5h11z" fill="#6f98f6" stroke="#b8d0ff" stroke-width="1.2"/>
<path d="M1 10.5h11" stroke="#3e5aa8" stroke-width="1.2"/>
<rect x="1" y="34" width="11" height="2" fill="#b8d0ff"/><rect x="1" y="36" width="11" height="2.5" fill="#6f98f6"/><rect x="1" y="38.5" width="11" height="1" fill="#3e5aa8"/>
<path d="M1 41.5h11L6.5 50.5z" fill="#6f98f6" stroke="#b8d0ff" stroke-width="1.2"/>
<path d="M12 41.5L6.5 50.5" stroke="#3e5aa8" stroke-width="1.2"/>
</svg>
<div class="a" id="out">... done
executing 'plot' ...
... done</div>
<!-- bottom frame -->
<div class="a" style="left:1px;top:732px;width:1022px;height:1px;background:#fff"></div>
<div class="a" style="left:3px;top:733px;width:1018px;height:4px;background:#c2c2c2"></div>
<div class="a" style="left:3px;top:737px;width:1018px;height:1px;background:#555"></div>
<div class="a" style="left:1px;top:738px;width:1022px;height:1px;background:#fff"></div>
<div class="a" style="left:19px;top:732px;width:1px;height:6px;background:#666"></div>
<div class="a" style="left:20px;top:732px;width:1px;height:6px;background:#fff"></div>
<div class="a" style="left:1002px;top:732px;width:1px;height:6px;background:#666"></div>
<div class="a" style="left:1003px;top:732px;width:1px;height:6px;background:#fff"></div>
<!-- GIMP window -->
<div class="a" style="left:900px;top:0;width:124px;height:136px;background:#000"></div>
<div class="a" style="left:901px;top:1px;width:123px;height:134px;background:#d6d6d6"></div>
<div class="a" style="left:901px;top:1px;width:95px;height:19px;background:linear-gradient(#6a8cc4,#5274b0 50%,#46639c)"></div>
<div class="a" style="left:901px;top:1px;width:95px;height:1px;background:#8eaad6"></div>
<div class="a" style="left:901px;top:1px;width:1px;height:127px;background:#8eaad6"></div>
<div class="a" style="left:902px;top:20px;width:2px;height:108px;background:#5a7ab4"></div>
<div class="a" style="left:901px;top:43px;width:1px;height:92px;background:#3a3a3a"></div>
<div class="a" style="left:902px;top:43px;width:2px;height:92px;background:#dcdcdc"></div>
<div class="a" style="left:904px;top:20px;width:120px;height:1px;background:#e8e8e8"></div>
<div class="a" style="left:904px;top:20px;width:1px;height:108px;background:#e8e8e8"></div>
<div class="a" style="left:905px;top:21px;width:119px;height:107px;background:#000"></div>
<svg class="a" style="left:900px;top:0;will-change:transform" width="124" height="136" viewBox="900 0 124 136">
<defs><linearGradient id="mg" x1="0" y1="0" x2="0" y2="1"><stop offset="0" stop-color="#f6f6f6"/><stop offset="0.5" stop-color="#dedede"/><stop offset="1" stop-color="#b8b8b8"/></linearGradient><linearGradient id="cg" x1="0" y1="0" x2="1" y2="1"><stop offset="0" stop-color="#f4f4f4"/><stop offset="0.45" stop-color="#d0d0d0"/><stop offset="1" stop-color="#8c8c8c"/></linearGradient><linearGradient id="bg" x1="0" y1="0" x2="1" y2="1"><stop offset="0" stop-color="#ffffff"/><stop offset="1" stop-color="#b4b4b4"/></linearGradient><linearGradient id="fg" x1="0" y1="0" x2="1" y2="0"><stop offset="0" stop-color="#000"/><stop offset="0.35" stop-color="#8c0000"/><stop offset="0.7" stop-color="#ff0a0a"/><stop offset="1" stop-color="#ff9800"/></linearGradient></defs>
<rect x="996" y="1" width="28" height="19" fill="#f2f2f2"/>
<rect x="998.5" y="4.5" width="12" height="12.5" fill="url(#bg)" stroke="#7a7a7a"/>
<rect x="1003" y="9" width="4" height="4" fill="#000"/>
<rect x="1013.5" y="4.5" width="12" height="12.5" fill="url(#bg)" stroke="#7a7a7a"/>
<rect x="1018" y="7.5" width="8" height="6.5" fill="#ddd" stroke="#000" stroke-width="2"/>
<text x="939.5" y="16" font-family="Liberation Sans, sans-serif" font-weight="bold" font-size="15.5" fill="#fff" textLength="36.5" lengthAdjust="spacingAndGlyphs">Gimp</text>
<g fill="#86a6dc"><rect x="978.5" y="4.5" width="1.3" height="1.3"/><rect x="981.5" y="4.5" width="1.3" height="1.3"/><rect x="984.5" y="4.5" width="1.3" height="1.3"/><rect x="987.5" y="4.5" width="1.3" height="1.3"/><rect x="990.5" y="4.5" width="1.3" height="1.3"/><rect x="977" y="8.5" width="1.3" height="1.3"/><rect x="980" y="8.5" width="1.3" height="1.3"/><rect x="983" y="8.5" width="1.3" height="1.3"/><rect x="986" y="8.5" width="1.3" height="1.3"/><rect x="989" y="8.5" width="1.3" height="1.3"/><rect x="992" y="8.5" width="1.3" height="1.3"/><rect x="978.5" y="12.5" width="1.3" height="1.3"/><rect x="981.5" y="12.5" width="1.3" height="1.3"/><rect x="984.5" y="12.5" width="1.3" height="1.3"/><rect x="987.5" y="12.5" width="1.3" height="1.3"/><rect x="990.5" y="12.5" width="1.3" height="1.3"/><rect x="977" y="16.5" width="1.3" height="1.3"/><rect x="980" y="16.5" width="1.3" height="1.3"/><rect x="983" y="16.5" width="1.3" height="1.3"/><rect x="986" y="16.5" width="1.3" height="1.3"/><rect x="989" y="16.5" width="1.3" height="1.3"/><rect x="992" y="16.5" width="1.3" height="1.3"/></g>
<path d="M904.5 10.5 Q907 8 910 9 Q914 9.5 918.5 6.5 Q917 11 912.5 14 Q909 16 907.5 13.5 Q906 12 904.5 10.5Z" fill="#5c5a48"/>
<ellipse cx="910" cy="11.5" rx="2.6" ry="2.4" fill="#8c8670"/><circle cx="910.6" cy="11.6" r="0.9" fill="#111"/>
<path d="M905 9.5l1.5-1 M907.5 8.5l1-1" stroke="#dfe6f4" stroke-width="1"/>
<path d="M909 15.5q2 .8 3.5-.8" stroke="#2a241c" stroke-width="1.6" fill="none"/>
<path d="M921.5 10.5h7.5" stroke="#34528a" stroke-width="1.5"/>
<path d="M929.8 7L932.5 9.2L935.5 6.5V15L932.5 12L929.8 14.500Z" fill="#aec4e8" stroke="#2c4a82" stroke-width="0.8"/>
<path d="M929.5 6.500v8.500 M936 6v9.500" stroke="#27447c" stroke-width="1.4"/>
<rect x="906" y="22" width="118" height="24" fill="url(#mg)"/>
<rect x="906" y="22" width="118" height="1" fill="#fff"/><rect x="906" y="22" width="1" height="24" fill="#fff"/>
<text x="912" y="37" font-family="Liberation Sans, sans-serif" font-size="12.3" fill="#000" textLength="29" lengthAdjust="spacing">Fich.</text>
<text x="956.3" y="37" font-family="Liberation Sans, sans-serif" font-size="12.3" fill="#000" textLength="22" lengthAdjust="spacing">Exts</text>
<text x="995.5" y="37" font-family="Liberation Sans, sans-serif" font-size="12.3" fill="#000" textLength="36" lengthAdjust="spacing">Ayuda</text>
<path d="M912.5 39.5h6 M962.5 39.5h5.5 M996 39.5h7.5" stroke="#f4f4f4" stroke-width="1.4"/>
<rect x="906" y="48.7" width="26.2" height="8.1" fill="#aaaaaa"/>
<rect x="934" y="48.7" width="26.2" height="8.1" fill="url(#cg)"/>
<rect x="934" y="48.7" width="26.2" height="1" fill="#fff" opacity=".75"/>
<rect x="934" y="48.7" width="1" height="8.1" fill="#fff" opacity=".6"/>
<rect x="962" y="48.7" width="26.2" height="8.1" fill="url(#cg)"/>
<rect x="962" y="48.7" width="26.2" height="1" fill="#fff" opacity=".75"/>
<rect x="962" y="48.7" width="1" height="8.1" fill="#fff" opacity=".6"/>
<rect x="990" y="48.7" width="26.2" height="8.1" fill="url(#cg)"/>
<rect x="990" y="48.7" width="26.2" height="1" fill="#fff" opacity=".75"/>
<rect x="990" y="48.7" width="1" height="8.1" fill="#fff" opacity=".6"/>
<rect x="1018" y="48.7" width="26.2" height="8.1" fill="url(#cg)"/>
<rect x="1018" y="48.7" width="26.2" height="1" fill="#fff" opacity=".75"/>
<rect x="1018" y="48.7" width="1" height="8.1" fill="#fff" opacity=".6"/>
<rect x="906" y="59" width="26.2" height="6.9" fill="url(#cg)"/>
<rect x="906" y="59" width="26.2" height="1" fill="#fff" opacity=".75"/>
<rect x="906" y="59" width="1" height="6.9" fill="#fff" opacity=".6"/>
<rect x="934" y="59" width="26.2" height="6.9" fill="url(#cg)"/>
<rect x="934" y="59" width="26.2" height="1" fill="#fff" opacity=".75"/>
<rect x="934" y="59" width="1" height="6.9" fill="#fff" opacity=".6"/>
<rect x="962" y="59" width="26.2" height="6.9" fill="url(#cg)"/>
<rect x="962" y="59" width="26.2" height="1" fill="#fff" opacity=".75"/>
<rect x="962" y="59" width="1" height="6.9" fill="#fff" opacity=".6"/>
<rect x="990" y="59" width="26.2" height="6.9" fill="url(#cg)"/>
<rect x="990" y="59" width="26.2" height="1" fill="#fff" opacity=".75"/>
<rect x="990" y="59" width="1" height="6.9" fill="#fff" opacity=".6"/>
<rect x="1018" y="59" width="26.2" height="6.9" fill="url(#cg)"/>
<rect x="1018" y="59" width="26.2" height="1" fill="#fff" opacity=".75"/>
<rect x="1018" y="59" width="1" height="6.9" fill="#fff" opacity=".6"/>
<rect x="906" y="68.1" width="26.2" height="6.6" fill="url(#cg)"/>
<rect x="906" y="68.1" width="26.2" height="1" fill="#fff" opacity=".75"/>
<rect x="906" y="68.1" width="1" height="6.6" fill="#fff" opacity=".6"/>
<rect x="934" y="68.1" width="26.2" height="6.6" fill="url(#cg)"/>
<rect x="934" y="68.1" width="26.2" height="1" fill="#fff" opacity=".75"/>
<rect x="934" y="68.1" width="1" height="6.6" fill="#fff" opacity=".6"/>
<rect x="962" y="68.1" width="26.2" height="6.6" fill="url(#cg)"/>
<rect x="962" y="68.1" width="26.2" height="1" fill="#fff" opacity=".75"/>
<rect x="962" y="68.1" width="1" height="6.6" fill="#fff" opacity=".6"/>
<rect x="990" y="68.1" width="26.2" height="6.6" fill="url(#cg)"/>
<rect x="990" y="68.1" width="26.2" height="1" fill="#fff" opacity=".75"/>
<rect x="990" y="68.1" width="1" height="6.6" fill="#fff" opacity=".6"/>
<rect x="1018" y="68.1" width="26.2" height="6.6" fill="url(#cg)"/>
<rect x="1018" y="68.1" width="26.2" height="1" fill="#fff" opacity=".75"/>
<rect x="1018" y="68.1" width="1" height="6.6" fill="#fff" opacity=".6"/>
<rect x="906" y="76.9" width="26.2" height="6.9" fill="url(#cg)"/>
<rect x="906" y="76.9" width="26.2" height="1" fill="#fff" opacity=".75"/>
<rect x="906" y="76.9" width="1" height="6.9" fill="#fff" opacity=".6"/>
<rect x="934" y="76.9" width="26.2" height="6.9" fill="url(#cg)"/>
<rect x="934" y="76.9" width="26.2" height="1" fill="#fff" opacity=".75"/>
<rect x="934" y="76.9" width="1" height="6.9" fill="#fff" opacity=".6"/>
<rect x="962" y="76.9" width="26.2" height="6.9" fill="url(#cg)"/>
<rect x="962" y="76.9" width="26.2" height="1" fill="#fff" opacity=".75"/>
<rect x="962" y="76.9" width="1" height="6.9" fill="#fff" opacity=".6"/>
<rect x="990" y="76.9" width="26.2" height="6.9" fill="url(#cg)"/>
<rect x="990" y="76.9" width="26.2" height="1" fill="#fff" opacity=".75"/>
<rect x="990" y="76.9" width="1" height="6.9" fill="#fff" opacity=".6"/>
<rect x="1018" y="76.9" width="26.2" height="6.9" fill="url(#cg)"/>
<rect x="1018" y="76.9" width="26.2" height="1" fill="#fff" opacity=".75"/>
<rect x="1018" y="76.9" width="1" height="6.9" fill="#fff" opacity=".6"/>
<rect x="906" y="86.4" width="26.2" height="6.6" fill="url(#cg)"/>
<rect x="906" y="86.4" width="26.2" height="1" fill="#fff" opacity=".75"/>
<rect x="906" y="86.4" width="1" height="6.6" fill="#fff" opacity=".6"/>
<rect x="934" y="86.4" width="26.2" height="6.6" fill="url(#cg)"/>
<rect x="934" y="86.4" width="26.2" height="1" fill="#fff" opacity=".75"/>
<rect x="934" y="86.4" width="1" height="6.6" fill="#fff" opacity=".6"/>
<rect x="962" y="86.4" width="26.2" height="6.6" fill="url(#cg)"/>
<rect x="962" y="86.4" width="26.2" height="1" fill="#fff" opacity=".75"/>
<rect x="962" y="86.4" width="1" height="6.6" fill="#fff" opacity=".6"/>
<rect x="990" y="86.4" width="26.2" height="6.6" fill="url(#cg)"/>
<rect x="990" y="86.4" width="26.2" height="1" fill="#fff" opacity=".75"/>
<rect x="990" y="86.4" width="1" height="6.6" fill="#fff" opacity=".6"/>
<rect x="1018" y="86.4" width="26.2" height="6.6" fill="url(#cg)"/>
<rect x="1018" y="86.4" width="26.2" height="1" fill="#fff" opacity=".75"/>
<rect x="1018" y="86.4" width="1" height="6.6" fill="#fff" opacity=".6"/>
<rect x="912" y="48.2" width="13" height="9.2" fill="#dcdcdc" stroke="#000" stroke-width="1.1" stroke-dasharray="1.2 1.6"/>
<path d="M911.4 59.8l.4 4.800 M914.400 59.800l.600 4.800" stroke="#111" stroke-width="1.100" fill="none"/>
<path d="M919.300 58.500l2.200 7.300 2.200-7.300" stroke="#fff" stroke-width="1.500" fill="none"/>
<path d="M918.300 58.800l2.400 7.400 M924.800 58.800l-2.400 7.400" stroke="#000" stroke-width="0.900" stroke-dasharray="1 1" fill="none"/>
<path d="M911.300 71.400l4-3v6z M927 71.400l-4-3v6z" fill="#000"/>
<rect x="915" y="68.500" width="8.500" height="1.800" fill="#fff"/><rect x="914" y="70.500" width="10.500" height="1.800" fill="#000"/><rect x="915" y="72.500" width="8.500" height="1.400" fill="#e4e4e4"/>
<path d="M915 73.800h9.500l-1.500 1.800h-6.500z" fill="#111"/>
<path d="M922.600 76l-6.600 7" stroke="#000" stroke-width="3.400" stroke-dasharray="1.200 0.800"/><path d="M922.400 76.200l-6.400 6.600" stroke="#fff" stroke-width="1.900"/>
<path d="M919 85l-5.600 8.200h10.800z" fill="#fff"/>
<ellipse cx="946.400" cy="53" rx="6.300" ry="5.200" fill="#dcdcdc" stroke="#000" stroke-width="1" stroke-dasharray="1 1.800"/>
<path d="M939 62.600l3.400-2.800v2h8.600v-2l3.400 2.800-3.400 2.800v-2h-8.600v2z" fill="#000"/>
<path d="M946.600 58.500v16.500" stroke="#000" stroke-width="1.300" stroke-dasharray="2.500 1"/>
<path d="M943.600 67v8" stroke="#f4f4f4" stroke-width="1" stroke-dasharray="1 1"/>
<path d="M952.600 76l-7.200 8" stroke="#000" stroke-width="3.200"/><path d="M952.300 76.300l-6 6.600" stroke="#fff" stroke-width="1.500"/>
<circle cx="945.600" cy="83.600" r="1.900" fill="#fff" stroke="#000" stroke-width=".8"/>
<path d="M954.600 85.600l-7.600 7.800" stroke="#000" stroke-width="2.800"/>
<path d="M946 85.500l-5.500 7.500" stroke="#000" stroke-width="2"/>
<circle cx="943.500" cy="92" r="1.700" fill="#fff" stroke="#000" stroke-width=".7"/>
<path d="M968.500 55.300q-2.500-3.500 2-5q4.500-2 9.500-1.500q4 .6 2.500 3q-2 2-6.500 2.300q-4 .2-6.500 1.400" fill="#d6d6d6" stroke="#111" stroke-width="1.100" stroke-dasharray="1.600 .8"/>
<circle cx="968.800" cy="55.900" r="1" fill="#eee" stroke="#000" stroke-width=".7"/>
<path d="M974.400 63.200l-3.800 2.900" stroke="#000" stroke-width="2.600"/>
<circle cx="977.200" cy="60.800" r="4.200" fill="#fff"/><path d="M973.200 62.500a4.300 4.300 0 0 0 8.300-1.200" stroke="#000" stroke-width="1" fill="none"/>
<path d="M976.500 66.600h7l-3.800 4.600z" fill="#000"/>
<path d="M979 69l-9 7" stroke="#000" stroke-width="4.200"/><path d="M977.600 69.400l-8 6.200" stroke="#fff" stroke-width="2.400"/>
<path d="M979 76.500l-10 7.500" stroke="#000" stroke-width="6.400"/><path d="M977.400 76.600l-9.400 7" stroke="#fff" stroke-width="4"/>
<rect x="968" y="83.800" width="6.200" height="1.300" fill="#fff"/>
<ellipse cx="973.600" cy="89.200" rx="4.500" ry="4.300" fill="#000"/><path d="M976 92l1.500 2.500" stroke="#000" stroke-width="1.200"/>
<path d="M996.200 47l5 5 M1001.200 47l-5 5" stroke="#000" stroke-width="1.300" stroke-dasharray="1 1"/>
<path d="M996.700 47l5 5 M1001.700 47l-5 5" stroke="#fff" stroke-width=".8" stroke-dasharray="1 1" stroke-dashoffset="1"/>
<path d="M1001 52l3.600 3.600" stroke="#eee" stroke-width="1.100"/>
<path d="M1004 55.400l4.600 3-8.800 7.400" stroke="#000" stroke-width="2.800" fill="none" stroke-linejoin="miter"/>
<circle cx="999.600" cy="66.600" r="1" fill="#fff"/>
<path d="M1001 67.800l5.600 3.200-4.600 5-6.200-2z" fill="#fff" stroke="#000" stroke-width=".9"/>
<path d="M1003.500 70l1.300 1.400-1.300 1.400-1.300-1.400z" fill="#000"/>
<path d="M1007.400 69.200q3.800 1 3.600 4.200q0 2.400-2.400 4l-5 3.400" stroke="#000" stroke-width="3" fill="none"/>
<ellipse cx="999.600" cy="79.200" rx="1.800" ry="1.500" fill="#000"/>
<path d="M1002.600 80.400l-4.800 4.800" stroke="#000" stroke-width="3.600"/><path d="M1002.300 80.800l-4.200 4.200" stroke="#fff" stroke-width="1.800"/>
<rect x="997.300" y="85.600" width="5.200" height="5.200" fill="#fff"/><path d="M997.300 86.500h5.200M997.300 88.300h5.200M997.300 90.100h5.200" stroke="#000" stroke-width=".9" stroke-dasharray=".9 .9"/>
<path d="M1002.600 85.600l3.400-.6 3.800 3v5.600h-5l-2.200-2.800z" fill="#fff" stroke="#000" stroke-width=".9"/>
<path d="M1005 90l1.500 1.200-1 1.600" stroke="#000" stroke-width=".9" fill="none"/>
<path d="M1023.500 49.500q-2.500 3 0 6.500 M1023.500 58q-2 3 0 6" stroke="#000" stroke-width="2" fill="none"/>
<rect x="906" y="95" width="71" height="31" fill="#dadada"/><rect x="906" y="95" width="71" height="1" fill="#fff"/><rect x="906" y="95" width="1" height="31" fill="#fff"/>
<rect x="979" y="95" width="45" height="31" fill="#dadada"/><rect x="979" y="95" width="45" height="1" fill="#fff"/><rect x="979" y="95" width="1" height="31" fill="#fff"/>
<rect x="933.500" y="111" width="34" height="10.500" fill="#fff" stroke="#000" stroke-width="1.200"/>
<rect x="914.500" y="99.500" width="34" height="12.500" fill="#fff" stroke="#000" stroke-width="1.200"/>
<rect x="917" y="102" width="29" height="8" fill="#000"/>
<path d="M949 109.500h6" stroke="#000" stroke-width="1"/>
<rect x="919" y="115" width="6.500" height="6.500" fill="#fff"/><rect x="914.500" y="111.500" width="6.500" height="6" fill="#000"/>
<path d="M957 102.500h5q3 0 3 3v4" stroke="#000" stroke-width="1.300" fill="none"/><path d="M956 102.500l3.500-3v6z M965 111.500l-3-3.500h6z" fill="#000"/>
<rect x="987" y="99" width="24" height="24" fill="#fff"/><circle cx="998.500" cy="110.500" r="9.500" fill="#000"/>
<rect x="1011" y="97" width="13" height="27" fill="#f6a93a"/><path d="M1014.500 98v25 M1018.500 98v25 M1022.500 98v25" stroke="#fbc060" stroke-width="1.500"/>
<rect x="905" y="126" width="119" height="2.200" fill="#000"/>
<rect x="987" y="124" width="37" height="4.200" fill="url(#fg)"/>
<rect x="901" y="128.200" width="123" height="1" fill="#fbfbfb"/>
<rect x="901" y="129" width="123" height="5" fill="#dcdcdc"/><rect x="902" y="129" width="18" height="5" fill="#b4b4b4"/><rect x="920" y="129" width="1" height="5" fill="#fff"/>
<rect x="901" y="134" width="123" height="1" fill="#f2f2f2"/>
<rect x="900" y="135" width="124" height="1" fill="#000"/>
</svg>
</body></html>
